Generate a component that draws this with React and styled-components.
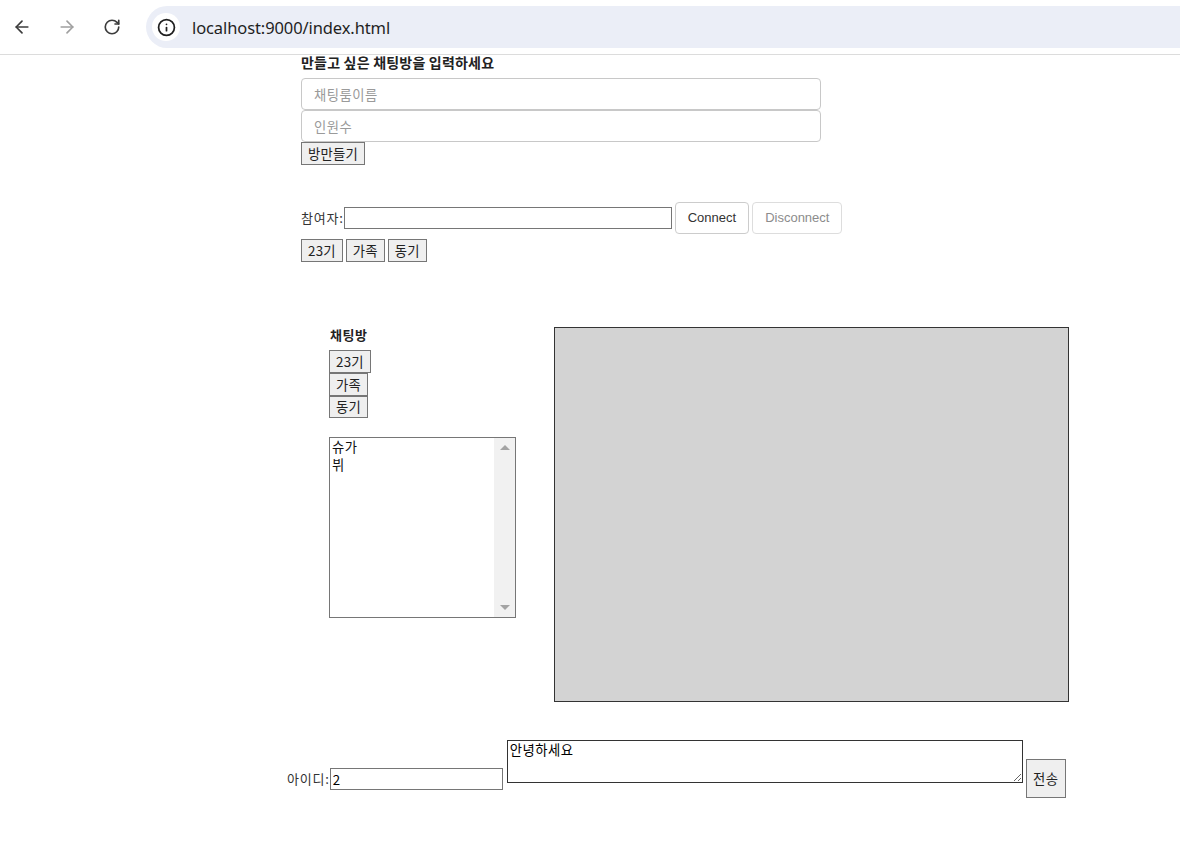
import React from 'react'
import styled, { createGlobalStyle } from 'styled-components'
import { ArrowLeft, ArrowRight, RotateCw, Info } from 'lucide-react'

const GlobalStyle = createGlobalStyle`
    html, body {
        margin: 0;
        padding: 0;
        background: #fff;
    }
    body {
        font-family: "Noto Sans CJK KR", "Noto Sans", sans-serif;
        font-size: 13px;
        color: #222;
    }
`

export default function App() {
    return (
        <>
            <GlobalStyle />
            <BrowserBar>
                <NavIcon><ArrowLeft size={20} strokeWidth={2} /></NavIcon>
                <NavIcon $muted><ArrowRight size={20} strokeWidth={2} /></NavIcon>
                <NavIcon><RotateCw size={18} strokeWidth={2.2} /></NavIcon>
                <AddressBar>
                    <SiteInfo><Info size={19} strokeWidth={2.2} /></SiteInfo>
                    <Url>localhost:9000/index.html</Url>
                </AddressBar>
            </BrowserBar>

            <Page>
                <CreateRoom>
                    <Title>만들고 싶은 채팅방을 입력하세요</Title>
                    <FormInput placeholder="채팅룸이름" />
                    <FormInput placeholder="인원수" />
                    <PlainButton>방만들기</PlainButton>
                </CreateRoom>

                <JoinRow>
                    <Label>참여자:</Label>
                    <TextInput $width={328} />
                    <ConnectButton>Connect</ConnectButton>
                    <ConnectButton disabled>Disconnect</ConnectButton>
                </JoinRow>
                <RoomButtons>
                    <PlainButton>23기</PlainButton>
                    <PlainButton>가족</PlainButton>
                    <PlainButton>동기</PlainButton>
                </RoomButtons>

                <ChatSection>
                    <SideColumn>
                        <SideTitle>채팅방</SideTitle>
                        <StackButtons>
                            <PlainButton>23기</PlainButton>
                            <PlainButton>가족</PlainButton>
                            <PlainButton>동기</PlainButton>
                        </StackButtons>
                        <ListBox>
                            <ListItems>
                                <ListItem>슈가</ListItem>
                                <ListItem>뷔</ListItem>
                            </ListItems>
                            <ScrollTrack>
                                <Arrow $dir="up" />
                                <Arrow $dir="down" />
                            </ScrollTrack>
                        </ListBox>
                    </SideColumn>
                    <MessageBoard />
                </ChatSection>

                <SendRow>
                    <Label $top={31}>아이디:</Label>
                    <TextInput $width={173} $top={28} defaultValue="2" />
                    <MessageArea defaultValue="안녕하세요" />
                    <SendButton>전송</SendButton>
                </SendRow>
            </Page>
        </>
    )
}

const BrowserBar = styled.div`
    height: 54px;
    border-bottom: 1px solid #dcdcdc;
    display: flex;
    align-items: center;
    padding-left: 12px;
    box-sizing: content-box;
    overflow: hidden;
`
const NavIcon = styled.div`
    width: 20px;
    height: 20px;
    display: flex;
    align-items: center;
    justify-content: center;
    margin-right: 25px;
    color: ${p => (p.$muted ? '#a0a0a0' : '#3c3c3c')};
`
const AddressBar = styled.div`
    flex: 1;
    height: 42px;
    margin-left: -1px;
    margin-right: -30px;
    border-radius: 21px;
    background: #ebeef7;
    display: flex;
    align-items: center;
    padding-left: 6px;
`
const SiteInfo = styled.div`
    width: 28px;
    height: 28px;
    border-radius: 50%;
    background: #fff;
    display: flex;
    align-items: center;
    justify-content: center;
    color: #1f1f1f;
`
const Url = styled.div`
    margin-left: 12px;
    font-family: "Noto Sans", "Open Sans", sans-serif;
    font-size: 16.5px;
    color: #1f1f1f;
    letter-spacing: -0.1px;
`

const Page = styled.div`
    padding-left: 287px;
    padding-bottom: 40px;
`
const CreateRoom = styled.div`
    margin-left: 14px;
    display: flex;
    flex-direction: column;
    align-items: flex-start;
`
const Title = styled.div`
    font-weight: bold;
    font-size: 14px;
    line-height: 15px;
    letter-spacing: 0.2px;
    margin-bottom: 8px;
    color: #222;
`
const FormInput = styled.input`
    width: 520px;
    height: 32px;
    box-sizing: border-box;
    border: 1px solid #c8c8c8;
    border-radius: 4px;
    padding: 0 12px;
    font-family: inherit;
    font-size: 13.33px;
    letter-spacing: 0.5px;
    outline: none;
    &::placeholder {
        color: #9a9a9a;
    }
`
const PlainButton = styled.button`
    font-family: inherit;
    font-size: 13.33px;
    line-height: 19px;
    letter-spacing: 0.25px;
    padding: 1px 6px;
    border: 1px solid #767676;
    border-radius: 0;
    background: #efefef;
    color: #222;
    white-space: nowrap;
`
const Label = styled.span`
    font-size: 13px;
    line-height: 16px;
    letter-spacing: 0.8px;
    color: #333;
    margin-top: ${p => p.$top || 0}px;
`
const TextInput = styled.input`
    width: ${p => p.$width}px;
    height: 22px;
    box-sizing: border-box;
    border: 1px solid #767676;
    padding: 0 2px;
    font-family: inherit;
    font-size: 13.33px;
    outline: none;
    margin-top: ${p => p.$top || 0}px;
`
const JoinRow = styled.div`
    margin: 37px 0 0 14px;
    display: flex;
    align-items: center;
    & > button {
        margin-left: 3px;
    }
    & > button + button {
        margin-left: 3px;
    }
`
const ConnectButton = styled.button`
    height: 32px;
    padding: 0 12px 1px;
    border: 1px solid #cccccc;
    border-radius: 4px;
    background: #fff;
    font-family: "Liberation Sans", Arial, sans-serif;
    font-size: 13px;
    color: #333;
    &:disabled {
        color: #8c8c8c;
        border-color: #dddddd;
    }
`
const RoomButtons = styled.div`
    margin: 5px 0 0 14px;
    display: flex;
    gap: 3px;
`
const ChatSection = styled.div`
    margin: 65px 0 0 14px;
    display: flex;
    align-items: flex-start;
`
const SideColumn = styled.div`
    width: 187px;
    padding-left: 28px;
    margin-right: 38px;
    display: flex;
    flex-direction: column;
    align-items: flex-start;
`
const SideTitle = styled.div`
    font-weight: bold;
    font-size: 13px;
    line-height: 15px;
    letter-spacing: 0.5px;
    margin-bottom: 8px;
    padding-left: 1px;
`
const StackButtons = styled.div`
    display: flex;
    flex-direction: column;
    align-items: flex-start;
    & > button:nth-child(3) {
        height: 22px;
        line-height: 18px;
    }
`
const ListBox = styled.div`
    margin-top: 19px;
    width: 187px;
    height: 181px;
    box-sizing: border-box;
    border: 1px solid #767676;
    display: flex;
`
const ListItems = styled.div`
    flex: 1;
    padding: 0 2px;
`
const ListItem = styled.div`
    font-size: 13.33px;
    line-height: 18px;
    letter-spacing: 0.5px;
    color: #111;
`
const ScrollTrack = styled.div`
    width: 21px;
    background: #f1f1f1;
    display: flex;
    flex-direction: column;
    justify-content: space-between;
    align-items: center;
    padding: 7px 0;
`
const Arrow = styled.div`
    width: 0;
    height: 0;
    border-left: 5px solid transparent;
    border-right: 5px solid transparent;
    ${p => (p.$dir === 'up'
        ? 'border-bottom: 5px solid #a3a3a3;'
        : 'border-top: 5px solid #a3a3a3;')}
`
const MessageBoard = styled.div`
    width: 515px;
    height: 375px;
    box-sizing: border-box;
    background: #d3d3d3;
    border: 1px solid #333;
`
const SendRow = styled.div`
    margin-top: 38px;
    display: flex;
    align-items: flex-start;
`
const MessageArea = styled.textarea`
    width: 516px;
    height: 43px;
    box-sizing: border-box;
    margin-left: 4px;
    border: 1px solid #333;
    padding: 0 2px;
    font-family: inherit;
    font-size: 13.33px;
    line-height: 18px;
    letter-spacing: 0.5px;
    outline: none;
`
const SendButton = styled.button`
    margin: 19px 0 0 3px;
    width: 40px;
    height: 39px;
    padding: 0;
    border: 1px solid #767676;
    background: #efefef;
    font-family: inherit;
    font-size: 13.33px;
    letter-spacing: 0.5px;
    color: #222;
`
